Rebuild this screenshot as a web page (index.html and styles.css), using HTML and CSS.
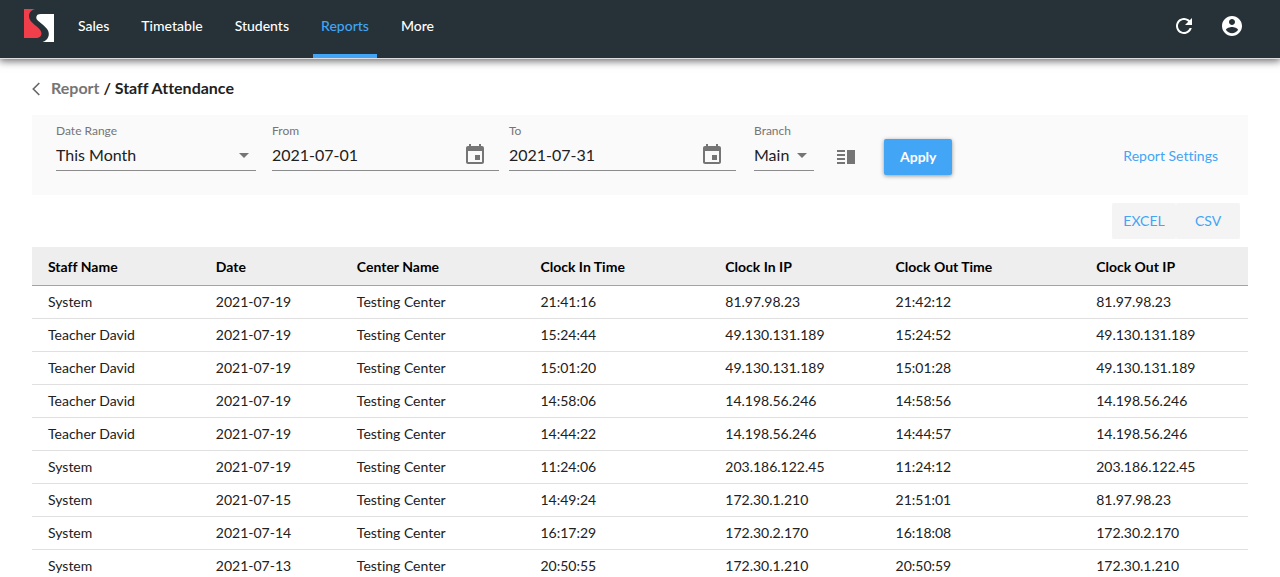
FILE: index.html
```html
<!DOCTYPE html>
<html lang="en">
<head>
<meta charset="utf-8">
<title>Staff Attendance</title>
<link rel="stylesheet" href="styles.css">
</head>
<body>
<header class="topbar">
  <a class="logo" href="#" aria-label="Home">
    <svg width="30" height="34" viewBox="24 9 30 34"><path fill="#f03e4a" d="M24 9H35C31.500 10 29 12.500 29 16C29 20 32 22.500 35.500 25.500C39 28.500 41.500 30.500 41.500 33.500C41.500 36.500 39 38 36 38H24Z"/><path fill="#fff" d="M54 14V42H42.500C46 41 48.800 38 48.800 34C48.800 30 46 27.500 42 24C38.500 21 36.300 20 36.300 17.500C36.300 15 38 14 41 14Z"/></svg>
  </a>
  <nav class="nav">
    <a href="#">Sales</a>
    <a href="#">Timetable</a>
    <a href="#">Students</a>
    <a href="#" class="active" aria-current="page">Reports</a>
    <a href="#">More</a>
  </nav>
  <div class="actions">
    <button type="button" aria-label="Refresh"><svg width="24" height="24" viewBox="0 0 24 24"><path d="M17.650 6.350C16.200 4.900 14.210 4 12 4c-4.420 0-7.990 3.580-7.990 8s3.570 8 7.990 8c3.730 0 6.840-2.550 7.730-6h-2.080c-.82 2.330-3.040 4-5.650 4-3.310 0-6-2.690-6-6s2.690-6 6-6c1.660 0 3.140.69 4.220 1.780L13 11h7V4l-2.350 2.350z"/></svg></button>
    <button type="button" aria-label="Account"><svg width="24" height="24" viewBox="0 0 24 24"><path d="M12 2C6.480 2 2 6.480 2 12s4.480 10 10 10 10-4.480 10-10S17.520 2 12 2zm0 3c1.660 0 3 1.340 3 3s-1.340 3-3 3-3-1.340-3-3 1.340-3 3-3zm0 14.200c-2.500 0-4.710-1.280-6-3.220.03-1.990 4-3.080 6-3.080 1.990 0 5.970 1.090 6 3.080-1.290 1.940-3.500 3.220-6 3.220z"/></svg></button>
  </div>
</header>
<main class="page">
  <h1 class="crumbs">
    <svg width="8" height="18" viewBox="0 0 8 18"><path d="M7.300 4L1.300 10l6 6" fill="none" stroke="#666" stroke-width="1.600"/></svg>
    <span><a href="#">Report</a> / Staff Attendance</span>
  </h1>
  <form class="filters">
    <div class="field range">
      <label for="range">Date Range</label>
      <div class="control"><select id="range"><option>This Month</option></select><svg class="arrow" width="24" height="24" viewBox="0 0 24 24"><path d="M7 10l5 5 5-5z"/></svg></div>
    </div>
    <div class="field date from">
      <label for="from">From</label>
      <div class="control"><input id="from" type="text" value="2021-07-01"><button type="button" aria-label="Choose start date"><svg width="24" height="24" viewBox="0 0 24 24"><path d="M17 12h-5v5h5v-5zM16 1v2H8V1H6v2H5c-1.110 0-1.990.9-1.990 2L3 19c0 1.100.89 2 2 2h14c1.100 0 2-.9 2-2V5c0-1.100-.9-2-2-2h-1V1h-2zm3 18H5V8h14v11z"/></svg></button></div>
    </div>
    <div class="field date to">
      <label for="to">To</label>
      <div class="control"><input id="to" type="text" value="2021-07-31"><button type="button" aria-label="Choose end date"><svg width="24" height="24" viewBox="0 0 24 24"><path d="M17 12h-5v5h5v-5zM16 1v2H8V1H6v2H5c-1.110 0-1.990.9-1.990 2L3 19c0 1.100.89 2 2 2h14c1.100 0 2-.9 2-2V5c0-1.100-.9-2-2-2h-1V1h-2zm3 18H5V8h14v11z"/></svg></button></div>
    </div>
    <div class="field branch">
      <label for="branch">Branch</label>
      <div class="control"><select id="branch"><option>Main</option></select><svg class="arrow" width="24" height="24" viewBox="0 0 24 24"><path d="M7 10l5 5 5-5z"/></svg></div>
    </div>
    <button type="button" class="split" aria-label="Columns"><svg width="24" height="24" viewBox="0 0 24 24"><path d="M3 5h8v2H3zM3 9h8v2H3zM3 13h8v2H3zM3 17h8v2H3zM13 5h8v14h-8z"/></svg></button>
    <button type="submit" class="apply">Apply</button>
    <a class="settings" href="#">Report Settings</a>
  </form>
  <div class="exports"><button type="button">EXCEL</button><button type="button">CSV</button></div>
  <table class="report">
    <colgroup><col class="c1"><col class="c2"><col class="c3"><col class="c4"><col class="c5"><col class="c6"><col></colgroup>
    <thead><tr><th>Staff Name</th><th>Date</th><th>Center Name</th><th>Clock In Time</th><th>Clock In IP</th><th>Clock Out Time</th><th>Clock Out IP</th></tr></thead>
    <tbody>
      <tr><td>System</td><td>2021-07-19</td><td>Testing Center</td><td>21:41:16</td><td>81.97.98.23</td><td>21:42:12</td><td>81.97.98.23</td></tr>
      <tr><td>Teacher David</td><td>2021-07-19</td><td>Testing Center</td><td>15:24:44</td><td>49.130.131.189</td><td>15:24:52</td><td>49.130.131.189</td></tr>
      <tr><td>Teacher David</td><td>2021-07-19</td><td>Testing Center</td><td>15:01:20</td><td>49.130.131.189</td><td>15:01:28</td><td>49.130.131.189</td></tr>
      <tr><td>Teacher David</td><td>2021-07-19</td><td>Testing Center</td><td>14:58:06</td><td>14.198.56.246</td><td>14:58:56</td><td>14.198.56.246</td></tr>
      <tr><td>Teacher David</td><td>2021-07-19</td><td>Testing Center</td><td>14:44:22</td><td>14.198.56.246</td><td>14:44:57</td><td>14.198.56.246</td></tr>
      <tr><td>System</td><td>2021-07-19</td><td>Testing Center</td><td>11:24:06</td><td>203.186.122.45</td><td>11:24:12</td><td>203.186.122.45</td></tr>
      <tr><td>System</td><td>2021-07-15</td><td>Testing Center</td><td>14:49:24</td><td>172.30.1.210</td><td>21:51:01</td><td>81.97.98.23</td></tr>
      <tr><td>System</td><td>2021-07-14</td><td>Testing Center</td><td>16:17:29</td><td>172.30.2.170</td><td>16:18:08</td><td>172.30.2.170</td></tr>
      <tr><td>System</td><td>2021-07-13</td><td>Testing Center</td><td>20:50:55</td><td>172.30.1.210</td><td>20:50:59</td><td>172.30.1.210</td></tr>
    </tbody>
  </table>
</main>
</body>
</html>
```
FILE: styles.css
```css
* { box-sizing: border-box; }
body { margin: 0; background: #fff; color: #212121; font: 14px/20px Lato, sans-serif; font-variant-ligatures: none; }
a { color: inherit; text-decoration: none; }
button, input, select { font: inherit; font-variant-ligatures: none; color: inherit; border: 0; background: none; padding: 0; margin: 0; }
button { cursor: pointer; }
svg { display: block; fill: #757575; }

.topbar { display: flex; background: #263238; height: 58px; padding: 0 36px 0 24px; box-shadow: 0 1px 0 #ddd, 0 2px 8px 1px rgba(0,0,0,.6); }
.logo { padding-top: 9px; margin-right: 16px; }
.nav { display: flex; gap: 16px; }
.nav a { display: flex; align-items: center; padding: 0 8px 2px; font-weight: 500; color: #fff; border-bottom: 4px solid transparent; }
.nav .active { color: #42a5f5; border-bottom-color: #42a5f5; }
.actions { display: flex; align-items: center; gap: 24px; margin-left: auto; padding-bottom: 6px; }
.actions svg { fill: #fff; }

.page { padding: 20px 32px 0; }
.crumbs { display: flex; align-items: center; gap: 11px; margin: 0 0 17px; font-size: 16px; line-height: 20px; font-weight: 700; }
.crumbs a { color: #757575; }

.filters { display: flex; align-items: flex-start; height: 80px; padding: 8px 24px; background: #fafafa; }
.field label { display: block; font-size: 12px; line-height: 16px; color: #757575; }
.control { display: flex; align-items: center; position: relative; height: 32px; border-bottom: 1px solid #8c8c8c; font-size: 16px; }
.control select, .control input { width: 100%; min-width: 0; height: 32px; appearance: none; outline: 0; }
.arrow { position: absolute; right: 0; top: 4px; pointer-events: none; }
.range { width: 200px; margin-right: 16px; }
.date { width: 227px; }
.date button { padding-right: 12px; }
.from { margin-right: 10px; }
.to { margin-right: 18px; }
.branch { width: 60px; margin-right: 20px; }
.split { margin-top: 22px; }
.apply { height: 36px; margin: 16px 0 0 26px; padding: 0 16px; border-radius: 2px; background: #42a5f5; color: #fff; font-weight: 700; box-shadow: 0 1px 4px rgba(0,0,0,.4); }
.settings { margin: 23px 6px 0 auto; color: #42a5f5; }

.exports { display: flex; justify-content: flex-end; padding: 8px 8px; }
.exports button { width: 64px; height: 36px; border-radius: 2px; background: #f4f4f4; color: #42a5f5; }

.report { width: 100%; border-collapse: collapse; table-layout: fixed; }
.c1 { width: 13.8%; }
.c2 { width: 11.6%; }
.c3 { width: 15.1%; }
.c4 { width: 15.2%; }
.c5 { width: 14%; }
.c6 { width: 16.5%; }
.report th { padding: 10px 16px 8px; text-align: left; font-weight: 700; color: #000; background: #eee; border-bottom: 1px solid #a3a3a3; }
.report td { padding: 6px 16px; border-bottom: 1px solid #e0e0e0; }
```
